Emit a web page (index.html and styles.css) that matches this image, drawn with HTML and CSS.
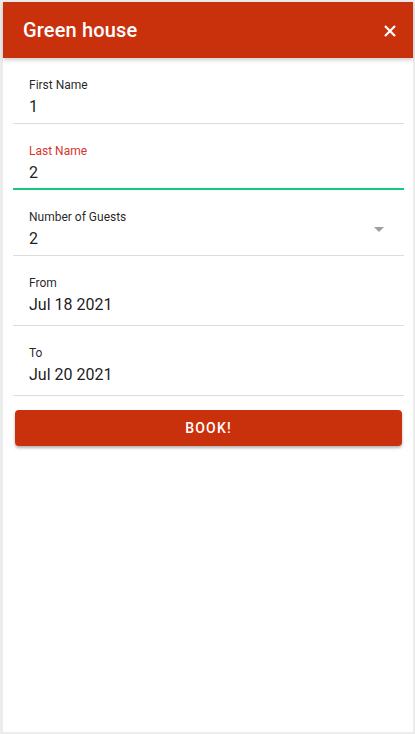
FILE: index.html
```html
<!DOCTYPE html>
<html>
<head>
<meta charset="utf-8">
<link rel="stylesheet" href="styles.css">
</head>
<body>
<div class="panel">
  <header class="header">
    <h1 class="title">Green house</h1>
    <button class="close" aria-label="Close">
      <svg width="12" height="12" viewBox="0 0 12 12"><path d="M1 1 L11 11 M11 1 L1 11" stroke="#fff" stroke-width="2.2" stroke-linecap="butt"/></svg>
    </button>
  </header>
  <form class="form">
    <div class="field">
      <div class="label">First Name</div>
      <div class="value">1</div>
    </div>
    <div class="field focused">
      <div class="label">Last Name</div>
      <div class="value">2</div>
    </div>
    <div class="field select">
      <div class="label">Number of Guests</div>
      <div class="value">2</div>
      <span class="arrow"></span>
    </div>
    <div class="field date">
      <div class="label">From</div>
      <div class="value">Jul 18 2021</div>
    </div>
    <div class="field date">
      <div class="label">To</div>
      <div class="value">Jul 20 2021</div>
    </div>
    <button type="button" class="book">BOOK!</button>
  </form>
</div>
</body>
</html>
```
FILE: styles.css
```css
* { box-sizing: border-box; }
html, body { margin: 0; height: 100%; }
body {
  background: #ececec;
  padding: 2px 2px 2px 3px;
  font-family: Roboto, "Noto Sans", sans-serif;
}
.panel {
  background: #fff;
  height: 730px;
  display: flex;
  flex-direction: column;
}
.header {
  height: 56px;
  background: #c9300c;
  display: flex;
  align-items: center;
  justify-content: space-between;
  padding: 0 17px 0 20px;
  box-shadow: 0 2px 4px rgba(0,0,0,0.2);
  position: relative;
  z-index: 1;
}
.title {
  margin: 0;
  color: #fff;
  font-size: 20px;
  font-weight: 500;
  letter-spacing: 0.15px;
}
.close {
  background: none;
  border: 0;
  padding: 0;
  width: 12px;
  height: 12px;
  display: flex;
  margin-top: 2px;
}
.form {
  padding: 0 9px 0 10px;
  display: flex;
  flex-direction: column;
}
.field {
  position: relative;
  padding: 20px 16px 6px;
  border-bottom: 1px solid #dcdcdc;
}
.field.date { padding-bottom: 10px; }
.field.focused {
  border-bottom: 2px solid #14c97b;
  padding-bottom: 5px;
}
.label {
  font-size: 12px;
  line-height: 14px;
  color: rgba(0,0,0,0.87);
}
.focused .label { color: #d8352a; }
.value {
  margin-top: 5px;
  font-size: 16px;
  line-height: 20px;
  color: rgba(0,0,0,0.9);
}
.arrow {
  position: absolute;
  right: 20px;
  top: 37px;
  width: 0;
  height: 0;
  border-left: 5px solid transparent;
  border-right: 5px solid transparent;
  border-top: 5px solid #9e9e9e;
}
.book {
  margin: 14px 2px 0;
  height: 36px;
  border: 0;
  border-radius: 4px;
  background: #c9300c;
  color: #fff;
  font-family: Roboto, "Noto Sans", sans-serif;
  font-size: 14px;
  font-weight: 500;
  letter-spacing: 1.2px;
  box-shadow: 0 2px 3px rgba(0,0,0,0.3);
}
```
